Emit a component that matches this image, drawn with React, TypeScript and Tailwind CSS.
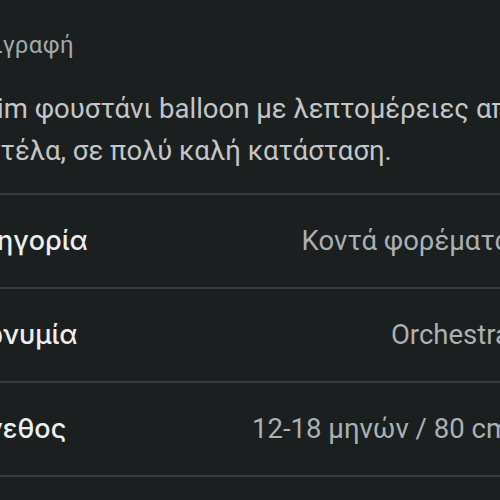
import React from "react";

const rows = [
  { label: "Κατηγορία", value: "Κοντά φορέματα" },
  { label: "Επωνυμία", value: "Orchestra" },
  { label: "Μέγεθος", value: "12-18 μηνών / 80 cm" },
];

export default function App() {
  return (
    <div
      className="w-[500px] h-[500px] overflow-hidden bg-[#1b1f20]"
      style={{ fontFamily: "Roboto, 'Noto Sans', sans-serif" }}
    >
      <div className="ml-[-44px] w-[554px] pt-[31px]">
        <div className="ml-[-6px] text-[24px] leading-[28px] tracking-[0.4px] text-[#a3a8ab]">Περιγραφή</div>
        <div className="mt-[29px] pb-[21px] text-[27.5px] leading-[42px] text-[#c2c6c8] whitespace-nowrap">
          <div className="ml-[18px]">Slim φουστάνι balloon με λεπτομέρειες από</div>
          <div>δαντέλα, σε πολύ καλή κατάσταση.</div>
        </div>
        {rows.map((r) => (
          <div
            key={r.label}
            className="flex h-[94px] items-center justify-between border-t-2 border-[#34393b]"
          >
            <span
              className="ml-[-8px] text-[27px] font-medium text-[#eceeef]"
              style={{ fontFamily: "Inter, sans-serif" }}
            >
              {r.label}
            </span>
            <span className="text-[27.5px] text-[#aab0b3]">{r.value}</span>
          </div>
        ))}
        <div className="border-t-2 border-[#34393b] h-[40px]" />
      </div>
    </div>
  );
}
